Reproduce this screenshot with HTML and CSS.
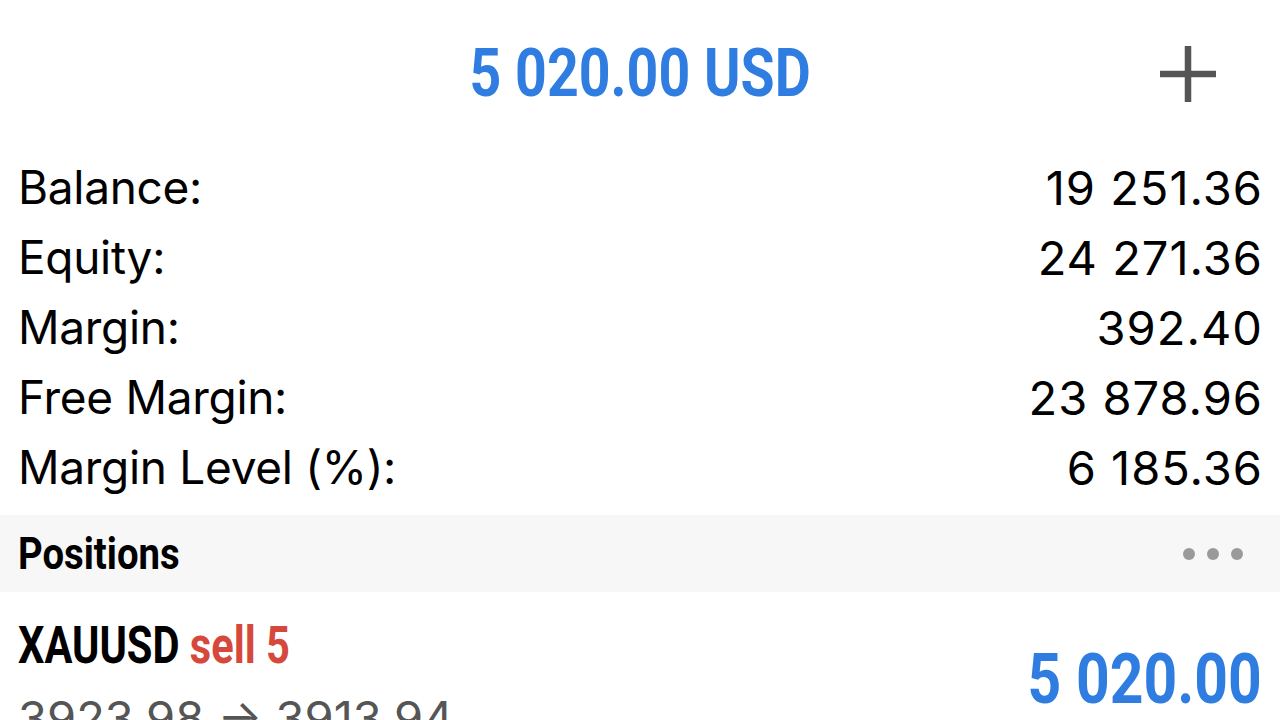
FILE: index.html
```html
<!DOCTYPE html>
<html>
<head>
<meta charset="utf-8">
<link rel="stylesheet" href="styles.css">
</head>
<body>
<div class="screen">
  <header class="top">
    <div class="title"><span class="cond cond-center">5 020.00 USD</span></div>
    <div class="plus" aria-label="add">
      <svg width="56" height="56" viewBox="0 0 56 56"><path d="M28 0V56M0 28H56" stroke="#555" stroke-width="6.5" fill="none"/></svg>
    </div>
  </header>
  <section class="summary">
    <div class="row"><span class="label">Balance:</span><span class="value">19 251.36</span></div>
    <div class="row"><span class="label">Equity:</span><span class="value">24 271.36</span></div>
    <div class="row"><span class="label">Margin:</span><span class="value">392.40</span></div>
    <div class="row"><span class="label">Free Margin:</span><span class="value">23 878.96</span></div>
    <div class="row"><span class="label">Margin Level (%):</span><span class="value">6 185.36</span></div>
  </section>
  <div class="section-head">
    <span class="section-title cond">Positions</span>
    <span class="dots"><i></i><i></i><i></i></span>
  </div>
  <div class="position">
    <div class="pos-left">
      <div class="pos-title"><span class="cond cond-sym">XAUUSD <span class="sell">sell 5</span></span></div>
      <div class="pos-prices">3923.98 → 3913.94</div>
    </div>
    <div class="pos-profit"><span class="cond cond-right">5 020.00</span></div>
  </div>
</div>
</body>
</html>
```
FILE: styles.css
```css
html, body {
  margin: 0;
  padding: 0;
  background: #ffffff;
}
.screen {
  width: 1280px;
  height: 720px;
  overflow: hidden;
  display: flex;
  flex-direction: column;
  font-family: "Inter", "Liberation Sans", sans-serif;
  color: #000;
}
.screen > * { flex-shrink: 0; }
.cond {
  display: inline-block;
  font-family: "Roboto", "Liberation Sans", sans-serif;
  font-weight: 700;
  transform: scaleX(0.84);
  transform-origin: left center;
  white-space: nowrap;
}
.cond-center { transform-origin: center center; }
.cond-right { transform-origin: right center; }
.cond-sym { transform: scaleX(0.8); }
.top {
  position: relative;
  height: 152px;
  display: flex;
  align-items: flex-start;
  justify-content: center;
  padding-top: 39px;
  box-sizing: border-box;
}
.title {
  font-size: 66px;
  color: #2f7de1;
  line-height: 1;
}
.plus {
  position: absolute;
  right: 64px;
  top: 46px;
  width: 56px;
  height: 56px;
}
.plus svg { display: block; }
.summary {
  display: flex;
  flex-direction: column;
  padding: 0 18px;
}
.row {
  height: 70px;
  display: flex;
  align-items: center;
  justify-content: space-between;
  font-size: 46px;
  font-weight: 400;
}
.label { letter-spacing: -0.3px; }
.value { font-size: 47px; letter-spacing: 1px; margin-right: -1px; }
.section-head {
  margin-top: 13px;
  height: 77px;
  background: #f7f7f7;
  display: flex;
  align-items: center;
  justify-content: space-between;
  padding: 0 37px 0 18px;
}
.section-title {
  font-size: 44px;
  transform: scaleX(0.87);
}
.dots {
  display: flex;
  gap: 12px;
}
.dots i {
  width: 12px;
  height: 12px;
  border-radius: 50%;
  background: #9a9a9a;
}
.position {
  display: flex;
  justify-content: space-between;
  align-items: flex-start;
  padding: 23px 18px 0 18px;
}
.pos-title {
  font-size: 52px;
  line-height: 60px;
}
.sell { color: #d5483b; }
.pos-prices {
  font-size: 47px;
  color: #555;
  line-height: 60px;
  margin-top: 12px;
}
.pos-profit {
  font-size: 70px;
  color: #2f7de1;
  margin-top: 28px;
  line-height: 1;
}
```
